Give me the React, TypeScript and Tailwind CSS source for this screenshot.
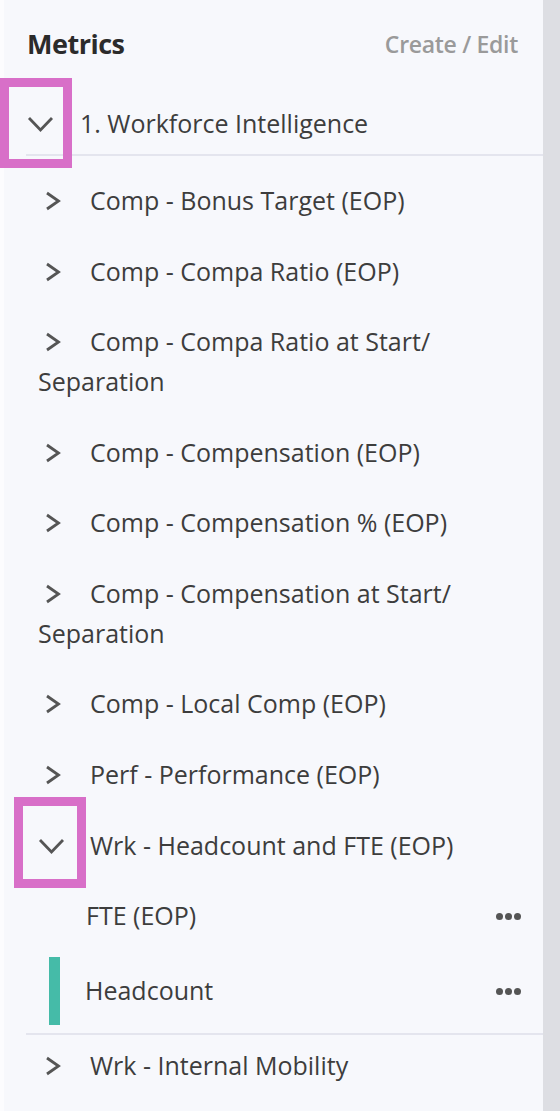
type Item = { label: string };

const ITEMS: Item[] = [
  { label: "Comp - Bonus Target (EOP)" },
  { label: "Comp - Compa Ratio (EOP)" },
  { label: "Comp - Compa Ratio at Start/ Separation" },
  { label: "Comp - Compensation (EOP)" },
  { label: "Comp - Compensation % (EOP)" },
  { label: "Comp - Compensation at Start/ Separation" },
  { label: "Comp - Local Comp (EOP)" },
  { label: "Perf - Performance (EOP)" },
];

function ChevRight({ className = "" }: { className?: string }) {
  return (
    <svg width="16" height="20" viewBox="0 0 16 20" className={className}>
      <polyline points="2,2 13.5,10 2,18" fill="none" stroke="#555" strokeWidth="2.8" strokeLinejoin="miter" />
    </svg>
  );
}

function ChevDown({ className = "" }: { className?: string }) {
  return (
    <svg width="27" height="17" viewBox="0 0 27 17" className={className}>
      <polyline points="2,2 13.5,14 25,2" fill="none" stroke="#555" strokeWidth="2.8" strokeLinejoin="miter" />
    </svg>
  );
}

function Dots() {
  return (
    <span className="flex gap-[2px] items-center">
      <span className="w-[7px] h-[7px] rounded-full bg-[#555]" />
      <span className="w-[7px] h-[7px] rounded-full bg-[#555]" />
      <span className="w-[7px] h-[7px] rounded-full bg-[#555]" />
    </span>
  );
}

export default function App() {
  return (
    <div
      className="relative flex w-[560px] h-[1111px] bg-[#dddee3] overflow-hidden text-[#3d3d3d]"
      style={{ fontFamily: "'Open Sans', 'Noto Sans', sans-serif" }}
    >
      <div className="w-[543px] h-full bg-[#f7f8fc] border-l-[4px] border-[#fcfcfe]">
        {/* Header */}
        <div className="flex items-center justify-between pl-[23px] pr-[25px] h-[88px]">
          <h2 className="text-[27px] font-bold text-[#2b2b2b] tracking-[-0.5px]">Metrics</h2>
          <span className="text-[23px] font-semibold text-[#9a9a9a] tracking-[-0.3px]">Create / Edit</span>
        </div>

        {/* Group */}
        <div className="ml-[22px] flex items-center pt-[6px] h-[68px] border-b-[2px] border-[#e4e5ee]">
          <ChevDown className="ml-[1px] mr-[26px] shrink-0" />
          <span className="text-[25px]">1. Workforce Intelligence</span>
        </div>

        <div className="pt-[9px]">
          {ITEMS.map((it) => (
            <div key={it.label} className="pl-[34px] pr-[20px] text-[25px] leading-[40px] pt-[15px] pb-[15.5px]">
              <ChevRight className="inline-block align-[-1px] ml-[7px] mr-[29px]" />
              {it.label}
            </div>
          ))}

          {/* Expanded */}
          <div className="pl-[34px] flex items-center text-[25px] h-[74px]">
            <ChevDown className="mr-[25px] shrink-0" />
            <span>Wrk - Headcount and FTE (EOP)</span>
          </div>
          <div className="flex items-center justify-between pl-[82px] pr-[22px] h-[66px] text-[25px]">
            <span>FTE (EOP)</span>
            <Dots />
          </div>
          <div className="ml-[22px] flex items-center justify-between pr-[22px] h-[86px] border-b-[2px] border-[#e4e5ee] text-[25px]">
            <div className="flex items-center">
              <span className="ml-[23px] w-[11px] h-[68px] bg-[#45bba8]" />
              <span className="ml-[25px]">Headcount</span>
            </div>
            <Dots />
          </div>
          <div className="pl-[34px] flex items-center text-[25px] h-[62px]">
            <ChevRight className="ml-[7px] mr-[29px] shrink-0" />
            <span>Wrk - Internal Mobility</span>
          </div>
        </div>
      </div>

      {/* annotation highlight boxes */}
      <div className="absolute left-0 top-[78px] w-[72px] h-[90px] border-[9px] border-[#d86fc8]" />
      <div className="absolute left-[14px] top-[797px] w-[72px] h-[91px] border-[9px] border-[#d86fc8]" />
    </div>
  );
}
